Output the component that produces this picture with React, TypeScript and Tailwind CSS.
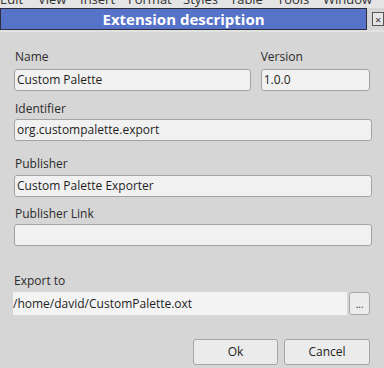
import React from "react";

const font = { fontFamily: '"Open Sans", "Noto Sans", sans-serif' };

function Label({ children, className = "" }: { children: React.ReactNode; className?: string }) {
  return <div className={`text-[12px] leading-[17px] text-[#2b2b2b] ${className}`}>{children}</div>;
}

function Field({ value, className = "" }: { value?: string; className?: string }) {
  return (
    <div
      className={`h-[22px] rounded-[3px] border border-[#a3a3a3] bg-[#f1f1f1] px-[2px] text-[12px] leading-[20px] text-[#1e1e1e] ${className}`}
    >
      {value}
    </div>
  );
}

export default function App() {
  return (
    <div className="relative w-[384px] h-[368px] overflow-hidden bg-[#d6d6d6]" style={font}>
      {/* menu strip remnant */}
      <div className="h-[8px] overflow-hidden bg-[#e4e4e4]">
        <div className="-mt-[9px] flex whitespace-nowrap text-[13px] leading-[16px] text-[#333]">
          <span className="w-[38px] shrink-0">Edit</span>
          <span className="w-[42px] shrink-0">View</span>
          <span className="w-[48px] shrink-0">Insert</span>
          <span className="w-[55px] shrink-0">Format</span>
          <span className="w-[47px] shrink-0">Styles</span>
          <span className="w-[47px] shrink-0">Table</span>
          <span className="w-[46px] shrink-0">Tools</span>
          <span className="shrink-0">Window</span>
        </div>
      </div>
      {/* title bar */}
      <div className="flex h-[22px] items-stretch">
        <div className="flex w-[370px] items-center justify-center border border-[#2d2d3a] bg-[#5672c9] text-[15px] font-bold text-white">
          Extension description
        </div>
        <div className="ml-[5px] mt-[4px] flex h-[14px] w-[12px] items-center justify-center border border-[#555] bg-[#e6e6e6] text-[11px] leading-none text-[#333]">
          ×
        </div>
      </div>
      <div className="h-[2px] bg-[#e2e2e2]" />

      <div className="px-[14px] pt-[16px]">
        <div className="flex gap-[10px]">
          <div className="w-[238px]">
            <Label className="pl-[1px]">Name</Label>
            <Field value="Custom Palette" className="mt-[4px]" />
          </div>
          <div className="w-[110px]">
            <Label>Version</Label>
            <Field value="1.0.0" className="mt-[4px]" />
          </div>
        </div>

        <Label className="mt-[9px] pl-[1px]">Identifier</Label>
        <Field value="org.custompalette.export" className="mt-[2px] w-[358px]" />

        <Label className="mt-[14px] pl-[1px]">Publisher</Label>
        <Field value="Custom Palette Exporter" className="mt-[3px] w-[358px]" />

        <Label className="mt-[8px] pl-[1px]">Publisher Link</Label>
        <Field className="mt-[2px] w-[358px]" />

        <Label className="mt-[26px]">Export to</Label>
        <div className="mt-[3px] flex items-center">
          <div className="-ml-[1px] h-[23px] w-[340px] bg-[#f3f3f3] text-[12px] leading-[23px] text-[#1e1e1e]">
            /home/david/CustomPalette.oxt
          </div>
          <div className="ml-[2px] flex h-[23px] w-[21px] items-center justify-center rounded-[3px] border border-[#a8a8a8] bg-[#ececec] text-[10px] leading-none text-[#333]">
            ...
          </div>
        </div>

        <div className="mt-[24px] flex justify-end gap-[6px]">
          <div className="flex h-[26px] w-[85px] items-center justify-center rounded-[3px] border border-[#a5a5a5] bg-[#ebebeb] text-[12px] text-[#222]">
            Ok
          </div>
          <div className="flex h-[26px] w-[86px] items-center justify-center rounded-[3px] border border-[#a5a5a5] bg-[#ebebeb] text-[12px] text-[#222]">
            Cancel
          </div>
        </div>
      </div>
    </div>
  );
}
